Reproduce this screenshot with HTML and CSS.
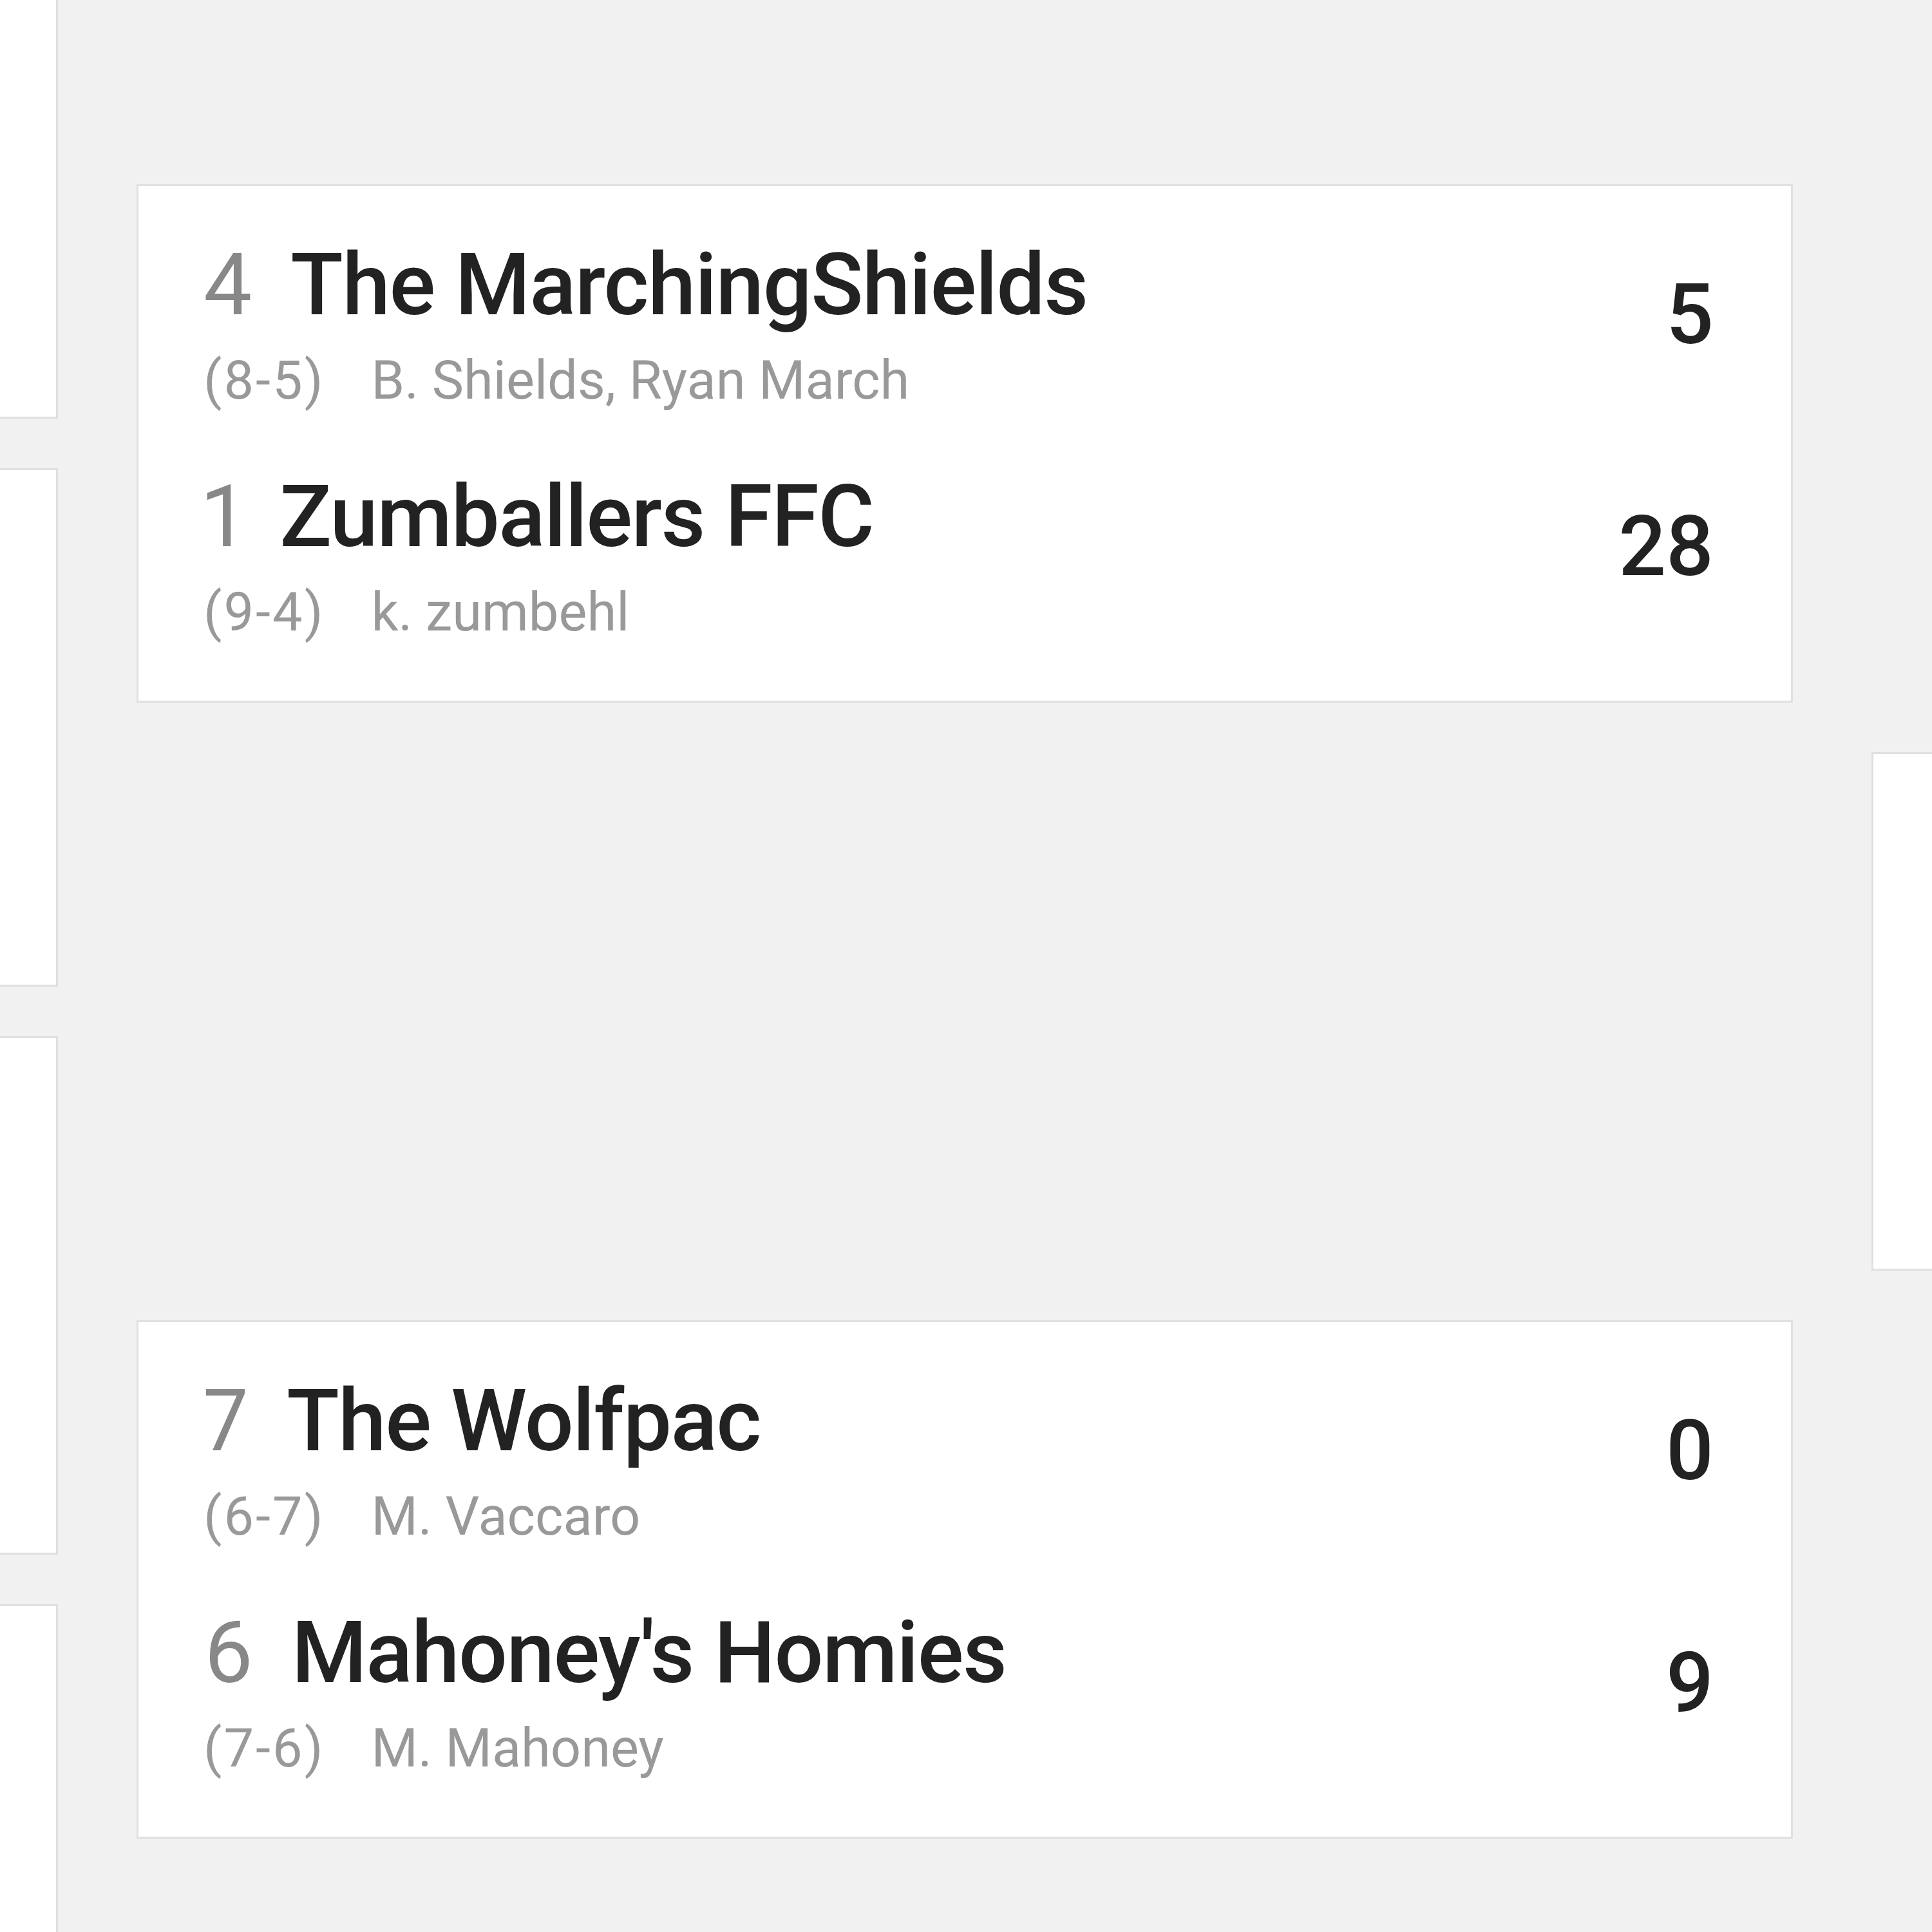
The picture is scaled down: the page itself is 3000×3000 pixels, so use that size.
FILE: index.html
```html
<!DOCTYPE html>
<html>

<head>
  <title>Playoff Bracket</title>
  <link rel="stylesheet" href="styles.css">
</head>

<body>
  <div class="page">
    <div class="bracket">

      <!-- Ronda 1 -->
      <div class="round">
        <div class="match">
          <div class="team">
            <div class="team-info">
              <div class="team-name"><span class="seed">4</span>The MarchingShields</div>
              <div class="meta"><span class="record">(8-5)</span>B. Shields, Ryan March</div>
            </div>
            <div class="score">21</div>
          </div>
          <div class="team">
            <div class="team-info">
              <div class="team-name"><span class="seed">5</span>Team Five</div>
              <div class="meta"><span class="record">(7-6)</span>Owner</div>
            </div>
            <div class="score">14</div>
          </div>
        </div>
        <div class="match">
          <div class="team">
            <div class="team-info">
              <div class="team-name"><span class="seed">1</span>Zumballers FFC</div>
              <div class="meta"><span class="record">(9-4)</span>k. zumbehl</div>
            </div>
            <div class="score">30</div>
          </div>
          <div class="team">
            <div class="team-info">
              <div class="team-name"><span class="seed">8</span>Team Eight</div>
              <div class="meta"><span class="record">(5-8)</span>Owner</div>
            </div>
            <div class="score">12</div>
          </div>
        </div>
        <div class="match">
          <div class="team">
            <div class="team-info">
              <div class="team-name"><span class="seed">7</span>The Wolfpac</div>
              <div class="meta"><span class="record">(6-7)</span>M. Vaccaro</div>
            </div>
            <div class="score">17</div>
          </div>
          <div class="team">
            <div class="team-info">
              <div class="team-name"><span class="seed">2</span>Team Two</div>
              <div class="meta"><span class="record">(8-5)</span>Owner</div>
            </div>
            <div class="score">10</div>
          </div>
        </div>
        <div class="match">
          <div class="team">
            <div class="team-info">
              <div class="team-name"><span class="seed">6</span>Mahoney's Homies</div>
              <div class="meta"><span class="record">(7-6)</span>M. Mahoney</div>
            </div>
            <div class="score">24</div>
          </div>
          <div class="team">
            <div class="team-info">
              <div class="team-name"><span class="seed">3</span>Team Three</div>
              <div class="meta"><span class="record">(8-5)</span>Owner</div>
            </div>
            <div class="score">20</div>
          </div>
        </div>
      </div>

      <!-- Semifinales -->
      <div class="round">
        <div class="match">
          <div class="team">
            <div class="team-info">
              <div class="team-name"><span class="seed">4</span>The MarchingShields</div>
              <div class="meta"><span class="record">(8-5)</span>B. Shields, Ryan March</div>
            </div>
            <div class="score">5</div>
          </div>
          <div class="team">
            <div class="team-info">
              <div class="team-name"><span class="seed">1</span>Zumballers FFC</div>
              <div class="meta"><span class="record">(9-4)</span>k. zumbehl</div>
            </div>
            <div class="score">28</div>
          </div>
        </div>
        <div class="match">
          <div class="team">
            <div class="team-info">
              <div class="team-name"><span class="seed">7</span>The Wolfpac</div>
              <div class="meta"><span class="record">(6-7)</span>M. Vaccaro</div>
            </div>
            <div class="score">0</div>
          </div>
          <div class="team">
            <div class="team-info">
              <div class="team-name"><span class="seed">6</span>Mahoney's Homies</div>
              <div class="meta"><span class="record">(7-6)</span>M. Mahoney</div>
            </div>
            <div class="score">9</div>
          </div>
        </div>
      </div>

      <!-- Final -->
      <div class="round">
        <div class="match">
          <div class="team">
            <div class="team-info">
              <div class="team-name"><span class="seed">1</span>Zumballers FFC</div>
              <div class="meta"><span class="record">(9-4)</span>k. zumbehl</div>
            </div>
            <div class="score">0</div>
          </div>
          <div class="team">
            <div class="team-info">
              <div class="team-name"><span class="seed">6</span>Mahoney's Homies</div>
              <div class="meta"><span class="record">(7-6)</span>M. Mahoney</div>
            </div>
            <div class="score">0</div>
          </div>
        </div>
      </div>

    </div>
  </div>
</body>

</html>
```

FILE: styles.css
```css
* {
  box-sizing: border-box;
}

body {
  font-family: Roboto, "Liberation Sans", Arial, sans-serif;
  background-color: #f1f1f1;
  margin: 0;
}

.page {
  width: 3000px;
  height: 3000px;
  overflow: hidden;
}

.bracket {
  display: flex;
  gap: 122px;
  height: 3528px;
  margin-left: -2482px;
  margin-top: -194px;
}

.round {
  flex-shrink: 0;
  width: 2572px;
  display: flex;
  flex-direction: column;
  justify-content: space-around;
}

.match {
  background-color: #fff;
  border: 3px solid #e0e0e0;
  padding: 87px 120px 87px 101px;
  display: flex;
  flex-direction: column;
  gap: 95px;
}

.team {
  display: flex;
  justify-content: space-between;
  align-items: flex-start;
}

.team-name {
  font-size: 134px;
  line-height: 134px;
  font-weight: 500;
  letter-spacing: -1.5px;
  color: #222;
  white-space: nowrap;
}

.seed {
  color: #888;
  font-weight: 400;
  font-variant-numeric: proportional-nums;
  letter-spacing: 0;
  margin-right: 60px;
}

.meta {
  margin-top: 31px;
  font-size: 83px;
  line-height: 100px;
  color: #999;
  white-space: nowrap;
}

.record {
  letter-spacing: 3px;
  margin-right: 72px;
}

.score {
  margin-top: 48px;
  font-size: 130px;
  line-height: 130px;
  font-weight: 500;
  color: #222;
}
```
